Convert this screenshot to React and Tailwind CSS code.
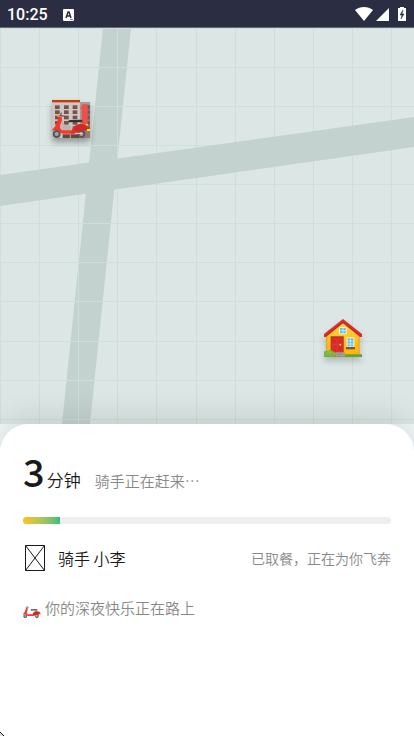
import React from "react";

const progress = 10;

const verticals = [0, 39, 78, 117, 156, 196, 235, 274, 313, 352, 391];
const horizontals = [0, 39, 78, 117, 156, 195, 234, 273, 313, 352, 391];

const Scooter = () => (
  <>
    <circle cx="14" cy="102" r="12" fill="#565656" />
    <circle cx="14" cy="102" r="6" fill="#a5a5a5" />
    <circle cx="88" cy="102" r="12" fill="#565656" />
    <circle cx="88" cy="102" r="6" fill="#a5a5a5" />
    <path d="M20 50H29C32 60 28 68 25 74C23 82 26 90 34 91H60L62 101H32C26 101 24 94 18 91C12 88 6 90 1 94V88C10 82 16 66 20 50Z" fill="#f4382f" />
    <path d="M58 101C59 84 68 74 84 72C98 71 108 76 113 88L100 92C88 91 80 96 76 102Z" fill="#e42f2b" />
    <path d="M66 88C66 76 78 73 90 74C99 75 104 80 107 87C96 94 70 100 66 88Z" fill="#cf2a29" />
    <path d="M48 66C48 60 54 59 62 60C72 60 80 58 91 60V67H50Z" fill="#343434" />
    <path d="M20 46L38 49M26 47L28 38" fill="none" stroke="#40464a" strokeWidth="3" />
    <circle cx="19" cy="47" r="4" fill="#ff9e2c" />
    <path d="M102 71L108 73L107 77L101 75ZM105 87H114V93H105Z" fill="#ffeb19" />
    <path d="M68 100H90" stroke="#e2e2e2" strokeWidth="3" />
  </>
);

const Restaurant = () => (
  <g>
    <path d="M84 6H114V114H84Z" fill="#a99b98" />
    <path d="M92 14H114V114H92Z" fill="#957a73" />
    <path d="M1 7H84V114H1Z" fill="#cfc5c2" />
    <path d="M0 0H84V7H0Z" fill="#c7380d" />
    {[16, 31, 47, 63, 79].map((y) => (
      <g key={y} fill="#75524a">
        <rect x="9" y={y} width="14" height="11" />
        <rect x="36" y={y} width="14" height="11" />
        <rect x="62" y={y} width="14" height="11" />
        <rect x="106" y={y} width="7" height="11" />
      </g>
    ))}
    <path d="M32 103H82V114H32Z" fill="#66453e" />
    <path d="M55 103V114" stroke="#b8aaa6" strokeWidth="3" />
    <path d="M30 58C36 65 32 76 46 76C56 76 60 80 58 90H34C26 86 27 76 30 68Z" fill="#bcb4b1" />
    <path d="M89 16L93 13H104L107 18V72H89V27L85 26V23L89 22Z" fill="#ed4f4b" />
    <Scooter />
  </g>
);

const House = () => (
  <g>
    <defs>
      <linearGradient id="wall" x1="0" y1="0" x2="0" y2="1">
        <stop stopColor="#ffd747" />
        <stop offset="1" stopColor="#ffb300" />
      </linearGradient>
    </defs>
    <path d="M7 48L57 5L106 48V109H7Z" fill="url(#wall)" />
    <path d="M8 48V109M105 48V109" stroke="#e6a021" strokeWidth="3" />
    <path d="M0 45L57 0L114 45V53L108 54L57 13L6 54L0 53Z" fill="#dc2d29" />
    <path d="M1 53L57 10L113 53" fill="none" stroke="#b72924" strokeWidth="3" />
    <path d="M45 24H68V46H45Z" fill="#fff0bd" />
    <path d="M48 27H65V43H48Z" fill="#55c1f5" />
    <path d="M57 26V44M47 35H66" stroke="#e8f8ff" strokeWidth="2" />
    <path d="M20 52H59V101H20Z" fill="#b92626" />
    <path d="M23 56H56V101H23Z" fill="#e0322f" />
    <path d="M27 61H37V73H27ZM42 61H52V73H42ZM27 80H37V96H27ZM42 80H52V96H42Z" fill="#d42b2a" />
    <circle cx="49" cy="77" r="3" fill="#ffca28" />
    <path d="M68 55H91V84H68Z" fill="#fff1cf" />
    <path d="M71 58H88V82H71Z" fill="#53bff0" />
    <path d="M79 57V84M70 66H90M70 75H90" stroke="#effaff" strokeWidth="2" />
    <path d="M66 84H93V91H66Z" fill="#795548" />
    <path d="M0 106H114V114H0Z" fill="#689f38" />
    <path d="M36 100H63V112H36Z" fill="#a6a5a2" />
    <path d="M36 105H63M46 105V112" stroke="#88827e" strokeWidth="2" />
    <path d="M0 113V101C1 96 6 94 11 97C15 91 25 93 27 98C34 97 37 104 34 113Z" fill="#7cb342" />
    <path d="M8 102C14 96 19 99 20 104" fill="none" stroke="#9ccc65" strokeWidth="3" />
  </g>
);

const StatusBar = () => (
  <header className="flex h-7 items-center justify-between border-b border-[#626b78] bg-[#2b2d42] px-[7px] pt-0.5 text-white">
    <div className="flex items-center gap-[15px]">
      <time className="font-['Roboto'] text-base font-medium">10:25</time>
      <svg width="11" height="12" viewBox="0 0 11 12" aria-hidden="true">
        <rect width="11" height="12" rx="1" fill="white" />
        <path d="M3 9L5 3H6L8 9M4 7H7" fill="none" stroke="#2b2d42" strokeWidth="1.5" />
        <path d="M7 10.5H10" stroke="#2b2d42" strokeWidth="0.6" />
      </svg>
    </div>
    <svg width="52" height="16" viewBox="0 0 52 16" fill="white" aria-hidden="true">
      <path d="M0 3C5 -1 13 -1 18 3L9 14Z" />
      <path d="M34 1V14H21Z" />
      <path d="M45 0H49V1H51V14H43V1H45Z" />
      <path d="M48 3L45 8H47L46 12L49 7H47Z" fill="#2b2d42" stroke="#2b2d42" strokeWidth="0.5" />
    </svg>
  </header>
);

const DeliveryMap = () => (
  <svg
    className="block h-[396px] w-full shrink-0 bg-[#dce6e4]"
    viewBox="0 0 414 396"
    preserveAspectRatio="xMidYMid slice"
    role="img"
    aria-label="配送地图"
  >
    <path d="M103 0H131L90 396H62Z" fill="#c3d2cf" />
    <g fill="#cddfda">
      {verticals.map((x) => (
        <rect key={x} x={x} y="0" width="1" height="396" />
      ))}
      {horizontals.map((y) => (
        <rect key={y} x="0" y={y} width="414" height="1" />
      ))}
    </g>
    <path d="M0 147L414 89V119L0 178Z" fill="#c3d2cf" />
    <svg x="52" y="72" width="38" height="38" viewBox="0 0 114 114" className="overflow-visible drop-shadow-[0_12px_10px_rgba(0,0,0,0.35)]">
      <Restaurant />
    </svg>
    <svg x="324" y="291" width="38" height="38" viewBox="0 0 114 114" className="overflow-visible drop-shadow-[0_12px_10px_rgba(0,0,0,0.2)]">
      <House />
    </svg>
  </svg>
);

const App = () => {
  return (
    <div className="relative flex min-h-screen flex-col bg-[#f0f5f8] font-['Noto_Sans_CJK_SC',sans-serif] font-[350]">
      <StatusBar />
      <DeliveryMap />

      <main className="relative flex-1 rounded-t-[28px] bg-white px-[23px] pt-6 shadow-[0_-8px_30px_rgba(0,0,0,0.1)]">
        {/* Arrival time */}
        <div className="flex h-[53px] items-baseline text-[#1a1a1a]">
          <strong className="text-[38px] leading-[46px] font-medium">3</strong>
          <span className="ml-0.5 text-[17px]">分钟</span>
          <span className="ml-3.5 text-[15px] text-[#888]">骑手正在赶来⋯</span>
        </div>

        <div
          className="mt-4 h-[7px] overflow-hidden rounded-full bg-[#eee]"
          role="progressbar"
          aria-label="配送进度"
          aria-valuenow={progress}
          aria-valuemin={0}
          aria-valuemax={100}
        >
          <div className="h-full bg-linear-to-r from-[#ffc107] to-[#22c279]" style={{ width: `${progress}%` }} />
        </div>

        {/* Rider */}
        <div className="mt-5 flex h-7 items-center">
          <svg width="23" height="27" viewBox="0 0 23 27" className="ml-0.5" fill="none" stroke="#1a1a1a" aria-hidden="true">
            <path d="M0.5 0.5H19.5V25.5H0.5ZM0.5 0.5L19.5 25.5M19.5 0.5L0.5 25.5" />
          </svg>
          <span className="ml-2.5 text-base text-[#1a1a1a]">骑手 小李</span>
          <span className="ml-auto text-sm text-[#888]">已取餐，正在为你飞奔</span>
        </div>

        <p className="mt-6 flex items-center gap-1 text-[15px] leading-6 text-[#888]">
          <svg width="18" height="18" viewBox="0 -6 114 114" className="shrink-0 overflow-visible" aria-hidden="true">
            <Scooter />
          </svg>
          你的深夜快乐正在路上
        </p>
      </main>

      <svg className="absolute bottom-0 left-0" width="4" height="4" viewBox="0 0 4 4" shapeRendering="crispEdges" aria-hidden="true">
        <path d="M0 0H1V1H2V2H3V3H4V4H0Z" fill="#111" />
        <path d="M0 1H1V2H2V3H3V4H0Z" fill="#ddd" />
      </svg>
    </div>
  );
};

export default App;
